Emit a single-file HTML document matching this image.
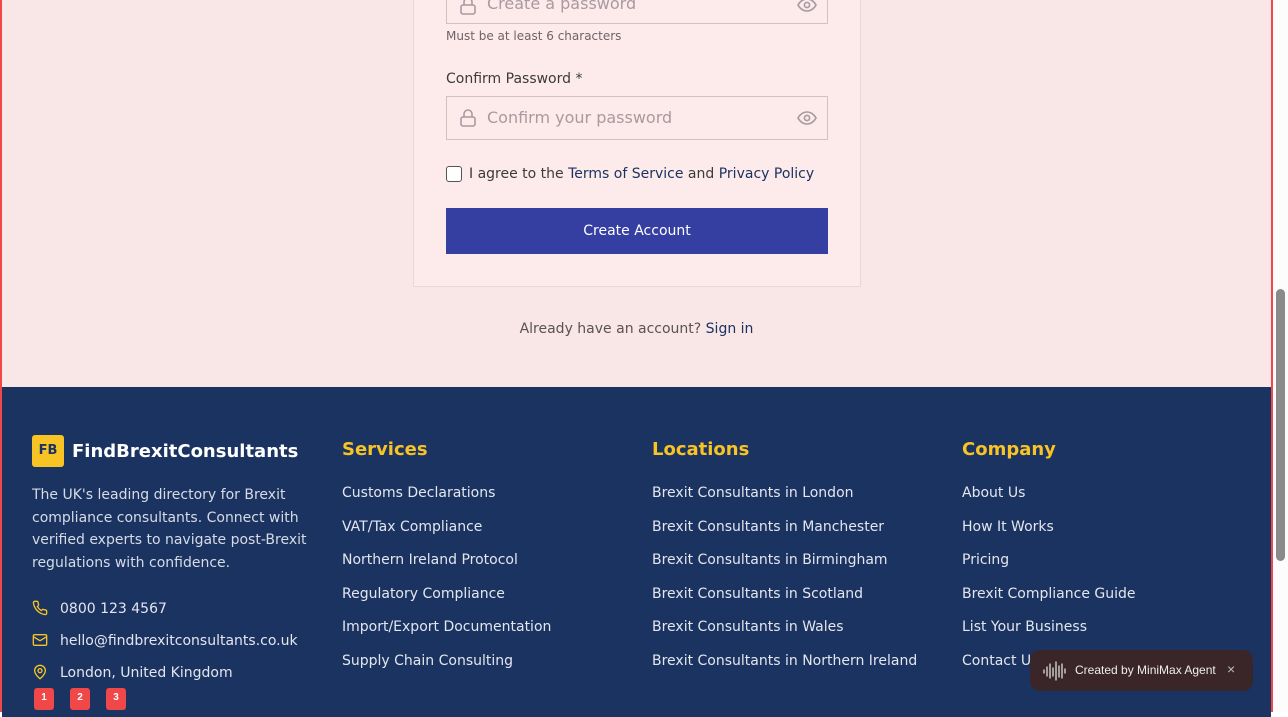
<!DOCTYPE html>
<html><head><meta charset="utf-8"><style>
*{box-sizing:border-box;margin:0;padding:0}
body{width:1288px;height:712px;overflow:hidden;font-family:"DejaVu Sans","Liberation Sans",sans-serif;background:#fff;position:relative}
.page{position:absolute;left:0;top:0;width:1273px;height:712px;border-left:2px solid #f04848;border-right:2px solid #f04848;background:#f9e6e6;overflow:hidden}
.card{position:absolute;left:411px;top:-20px;width:448px;height:307px;background:#fdeaea;border:1px solid #ead6d6;border-top:none}
.inp{position:absolute;left:444px;width:382px;height:44px;border:1px solid #cfc0c4;background:#fdeaea;font-size:16px;color:#a79aa0}
.inp span{position:absolute;left:40px;top:11px}
.lbl{position:absolute;font-size:14px;color:#3b3b3b}
footer{position:absolute;left:2px;top:387px;width:1269px;height:330px;background:#1b3360;color:#e4e6ee}
.h{position:absolute;top:439px;color:#f7c325;font-weight:bold;font-size:18px}
.lk{position:absolute;font-size:14px;color:#e4e6ee;white-space:nowrap}
.badge{position:absolute;top:688px;width:20px;height:22px;background:#f04848;color:#fff;font-size:10px;font-weight:bold;text-align:center;line-height:20px;border-radius:3px;font-family:"Liberation Sans",sans-serif}
</style></head><body>
<div class="page">
<div class="card"></div>
<div class="inp" style="top:-20px"><span style="top:13px">Create a password</span>
<svg style="position:absolute;left:12px;top:15px" width="18" height="20" viewBox="0 0 18 20" fill="none" stroke="#a79aa0" stroke-width="1.6"><rect x="2" y="9" width="14" height="9" rx="2"/><path d="M5 9V6a4 4 0 0 1 8 0v3"/></svg>
<svg style="position:absolute;left:350px;top:17px" width="20" height="14" viewBox="0 0 20 14" fill="none" stroke="#a79aa0" stroke-width="1.6"><path d="M1 7s3-6 9-6 9 6 9 6-3 6-9 6-9-6-9-6z"/><circle cx="10" cy="7" r="2.6"/></svg></div>
<div style="position:absolute;left:444px;top:29px;font-size:12px;color:#6e6468">Must be at least 6 characters</div>
<div class="lbl" style="left:444px;top:71px">Confirm Password *</div>
<div class="inp" style="top:96px"><span>Confirm your password</span>
<svg style="position:absolute;left:12px;top:11px" width="18" height="20" viewBox="0 0 18 20" fill="none" stroke="#a79aa0" stroke-width="1.6"><rect x="2" y="9" width="14" height="9" rx="2"/><path d="M5 9V6a4 4 0 0 1 8 0v3"/></svg>
<svg style="position:absolute;left:350px;top:14px" width="20" height="14" viewBox="0 0 20 14" fill="none" stroke="#a79aa0" stroke-width="1.6"><path d="M1 7s3-6 9-6 9 6 9 6-3 6-9 6-9-6-9-6z"/><circle cx="10" cy="7" r="2.6"/></svg></div>
<div style="position:absolute;left:444px;top:166px;width:16px;height:16px;border:1px solid #555;border-radius:3px;background:#fff"></div>
<div class="lbl" style="left:467px;top:166px;color:#3b3b3b">I agree to the <span style="color:#1b3360">Terms of Service</span> and <span style="color:#1b3360">Privacy Policy</span></div>
<div style="position:absolute;left:444px;top:208px;width:382px;height:46px;background:#353fa2;color:#fff;font-size:14px;text-align:center;line-height:47px">Create Account</div>
<div style="position:absolute;left:0;width:1269px;top:321px;text-align:center;font-size:14px;color:#5a5256">Already have an account? <span style="color:#1b3360">Sign in</span></div>
</div>
<footer></footer>
<div style="position:absolute;left:32px;top:435px;width:32px;height:32px;background:#f7c325;border-radius:3px;color:#1b3360;font-weight:bold;font-size:13px;text-align:center;line-height:32px">FB</div>
<div style="position:absolute;left:72px;top:441px;color:#fff;font-weight:bold;font-size:18px">FindBrexitConsultants</div>
<div style="position:absolute;left:32px;top:484px;width:285px;font-size:14px;line-height:22.6px;color:#d7dbe6">The UK's leading directory for Brexit compliance consultants. Connect with verified experts to navigate post-Brexit regulations with confidence.</div>
<svg style="position:absolute;left:32px;top:600px" width="16" height="16" viewBox="0 0 24 24" fill="none" stroke="#f7c325" stroke-width="2"><path d="M22 16.9v3a2 2 0 0 1-2.2 2 19.8 19.8 0 0 1-8.6-3.1 19.5 19.5 0 0 1-6-6A19.8 19.8 0 0 1 2.1 4.2 2 2 0 0 1 4.1 2h3a2 2 0 0 1 2 1.7c.1 1 .4 1.9.7 2.8a2 2 0 0 1-.5 2.1L8 9.9a16 16 0 0 0 6 6l1.3-1.3a2 2 0 0 1 2.1-.4c.9.3 1.8.6 2.8.7a2 2 0 0 1 1.7 2z"/></svg>
<div class="lk" style="left:60px;top:601px">0800 123 4567</div>
<svg style="position:absolute;left:32px;top:632px" width="16" height="16" viewBox="0 0 24 24" fill="none" stroke="#f7c325" stroke-width="2"><rect x="2" y="4" width="20" height="16" rx="2"/><path d="M22 7l-10 6L2 7"/></svg>
<div class="lk" style="left:60px;top:633px">hello@findbrexitconsultants.co.uk</div>
<svg style="position:absolute;left:32px;top:664px" width="16" height="16" viewBox="0 0 24 24" fill="none" stroke="#f7c325" stroke-width="2"><path d="M20 10c0 6-8 12-8 12s-8-6-8-12a8 8 0 0 1 16 0z"/><circle cx="12" cy="10" r="3"/></svg>
<div class="lk" style="left:60px;top:665px">London, United Kingdom</div>
<div class="badge" style="left:34px">1</div><div class="badge" style="left:70px">2</div><div class="badge" style="left:106px">3</div>

<div class="h" style="left:342px">Services</div>
<div class="lk" style="left:342px;top:485px">Customs Declarations</div>
<div class="lk" style="left:342px;top:519px">VAT/Tax Compliance</div>
<div class="lk" style="left:342px;top:552px">Northern Ireland Protocol</div>
<div class="lk" style="left:342px;top:586px">Regulatory Compliance</div>
<div class="lk" style="left:342px;top:619px">Import/Export Documentation</div>
<div class="lk" style="left:342px;top:653px">Supply Chain Consulting</div>

<div class="h" style="left:652px">Locations</div>
<div class="lk" style="left:652px;top:485px">Brexit Consultants in London</div>
<div class="lk" style="left:652px;top:519px">Brexit Consultants in Manchester</div>
<div class="lk" style="left:652px;top:552px">Brexit Consultants in Birmingham</div>
<div class="lk" style="left:652px;top:586px">Brexit Consultants in Scotland</div>
<div class="lk" style="left:652px;top:619px">Brexit Consultants in Wales</div>
<div class="lk" style="left:652px;top:653px">Brexit Consultants in Northern Ireland</div>

<div class="h" style="left:962px">Company</div>
<div class="lk" style="left:962px;top:485px">About Us</div>
<div class="lk" style="left:962px;top:519px">How It Works</div>
<div class="lk" style="left:962px;top:552px">Pricing</div>
<div class="lk" style="left:962px;top:586px">Brexit Compliance Guide</div>
<div class="lk" style="left:962px;top:619px">List Your Business</div>
<div class="lk" style="left:962px;top:653px">Contact Us</div>

<div style="position:absolute;left:1030px;top:650px;width:223px;height:41px;background:#3a2628;border-radius:10px;color:#eee;font-family:'Liberation Sans',sans-serif;font-size:12px">
<svg style="position:absolute;left:12px;top:10px" width="26" height="22" viewBox="0 0 26 22" fill="none" stroke="#ddd" stroke-width="1.3" stroke-linecap="round"><path d="M2 10v3M5 7v9M8 4v14M11 8v8M14 2v18M17 6v11M20 4v14M23 9v4"/></svg>
<span style="position:absolute;left:45px;top:13px">Created by MiniMax Agent</span>
<span style="position:absolute;left:197px;top:11px;font-size:14px;color:#bbb">×</span></div>

<div style="position:absolute;left:1273px;top:0;width:15px;height:712px;background:#fcfcfc"></div>
<div style="position:absolute;left:1276px;top:289px;width:9px;height:272px;background:#8a8a8a;border-radius:5px"></div>
</body></html>
